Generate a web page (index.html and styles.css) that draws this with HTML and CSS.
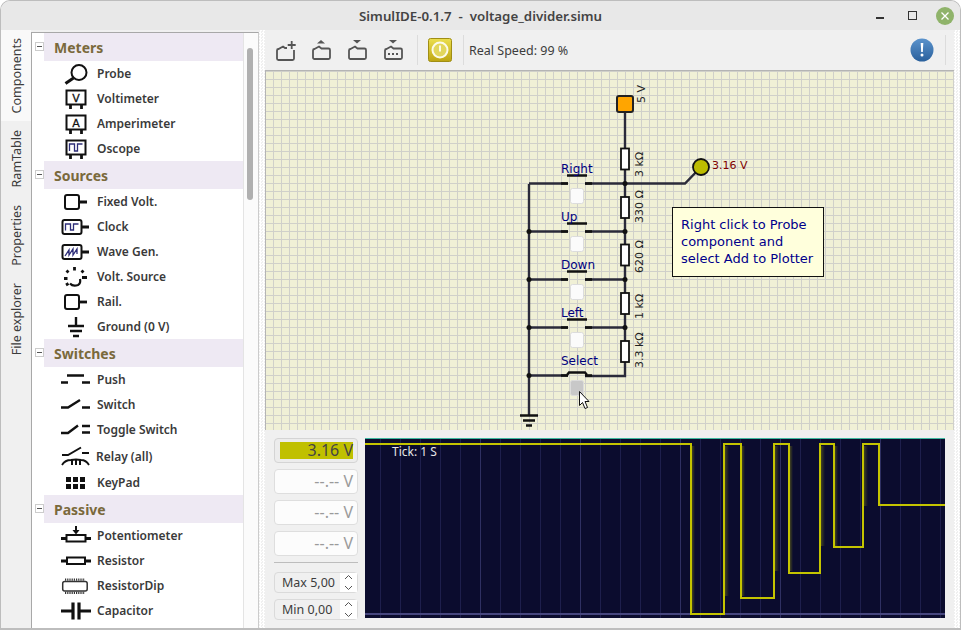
FILE: index.html
```html
<!DOCTYPE html>
<html lang="en">
<head>
<meta charset="utf-8">
<title>SimulIDE-0.1.7 - voltage_divider.simu</title>
<link rel="stylesheet" href="styles.css">
</head>
<body>
<div class="window">
  <header class="titlebar">
    <span class="title">SimulIDE-0.1.7&nbsp; -&nbsp; voltage_divider.simu</span>
    <div class="winbtns">
      <span class="win-min"></span>
      <span class="win-max"></span>
      <svg class="win-close" width="18" height="18" viewBox="0 0 18 18"><circle cx="9" cy="9" r="9" fill="#8fb36a"/><path d="M5.500 5.500l7 7M12.500 5.500l-7 7" stroke="#fff" stroke-width="1.300"/></svg>
    </div>
  </header>
  <div class="main">
    <nav class="tabs">
      <div class="tab active"><span>Components</span></div>
      <div class="tab"><span>RamTable</span></div>
      <div class="tab"><span>Properties</span></div>
      <div class="tab"><span>File explorer</span></div>
    </nav>
    <aside class="panel">
      <div class="tree">
        <div class="head"><i class="toggle"></i><b>Meters</b></div>
        <div class="item"><svg class="ic" viewBox="0 0 32 24"><circle cx="19" cy="10.500" r="7.500" fill="none" stroke="#111" stroke-width="2"/><path d="M13.500 16L5.500 21.500" stroke="#111" stroke-width="3"/></svg><span>Probe</span></div>
        <div class="item"><svg class="ic" viewBox="0 0 32 24"><rect x="6.500" y="3.500" width="19" height="14" fill="#fff" stroke="#111" stroke-width="2"/><path d="M10.500 18v4M21.500 18v4" stroke="#111" stroke-width="2.800"/><text x="16" y="14.500" class="ic-letter">V</text></svg><span>Voltimeter</span></div>
        <div class="item"><svg class="ic" viewBox="0 0 32 24"><rect x="6.500" y="3.500" width="19" height="14" fill="#fff" stroke="#111" stroke-width="2"/><path d="M10.500 18v4M21.500 18v4" stroke="#111" stroke-width="2.800"/><text x="16" y="14.500" class="ic-letter">A</text></svg><span>Amperimeter</span></div>
        <div class="item"><svg class="ic" viewBox="0 0 32 24"><rect x="6.500" y="3.500" width="19" height="14" fill="#fff" stroke="#111" stroke-width="2"/><path d="M10.500 18v4M21.500 18v4" stroke="#111" stroke-width="2.800"/><path d="M9.500 14V7h5v7h3V7h5" fill="none" stroke="#2c2c78" stroke-width="1.300"/></svg><span>Oscope</span></div>

        <div class="head"><i class="toggle"></i><b>Sources</b></div>
        <div class="item"><svg class="ic" viewBox="0 0 32 24"><rect x="5" y="5" width="14" height="14" rx="2" fill="#fff" stroke="#111" stroke-width="2"/><path d="M19 12h8" stroke="#111" stroke-width="2.800"/></svg><span>Fixed Volt.</span></div>
        <div class="item"><svg class="ic" viewBox="0 0 32 24"><rect x="2.500" y="5" width="19" height="14" rx="2" fill="#fff" stroke="#111" stroke-width="2"/><path d="M21 12h8" stroke="#111" stroke-width="2.800"/><path d="M5.500 15.500V9h5v6h3V9h5" fill="none" stroke="#2c2c78" stroke-width="1.300"/></svg><span>Clock</span></div>
        <div class="item"><svg class="ic" viewBox="0 0 32 24"><rect x="2.500" y="5" width="19" height="14" rx="2" fill="#fff" stroke="#111" stroke-width="2"/><path d="M21 12h8" stroke="#111" stroke-width="2.800"/><path d="M5 16l4-6v5l4-6v6l4-6v5" fill="none" stroke="#2c2c78" stroke-width="1.300"/></svg><span>Wave Gen.</span></div>
        <div class="item"><svg class="ic" viewBox="0 0 32 24"><path d="M14.500 2v3.500M6.500 5.500l2 2M23.500 5.500l-2 2M4 13.500h3.500M22 12.500h5M6 20l2.500-1.500" stroke="#111" stroke-width="2.800"/><path d="M10 18.500q3 3.500 8 1.500q3-1.500 2-6" fill="none" stroke="#111" stroke-width="2.200"/></svg><span>Volt. Source</span></div>
        <div class="item"><svg class="ic" viewBox="0 0 32 24"><rect x="5" y="5" width="14" height="14" rx="2" fill="#fff" stroke="#111" stroke-width="2"/><path d="M19 12h8" stroke="#111" stroke-width="2.800"/></svg><span>Rail.</span></div>
        <div class="item"><svg class="ic" viewBox="0 0 32 24"><path d="M16 2v9" stroke="#111" stroke-width="2.400"/><path d="M8 11h16M10 16h12M13 21h6" stroke="#111" stroke-width="2.600"/></svg><span>Ground (0 V)</span></div>

        <div class="head"><i class="toggle"></i><b>Switches</b></div>
        <div class="item"><svg class="ic" viewBox="0 0 32 24"><path d="M7 7.500h17M1 14.500h7M22 14.500h8" stroke="#111" stroke-width="2.400"/></svg><span>Push</span></div>
        <div class="item"><svg class="ic" viewBox="0 0 32 24"><path d="M1 14.500h7L20 7M22 14.500h8" fill="none" stroke="#111" stroke-width="2.400"/></svg><span>Switch</span></div>
        <div class="item"><svg class="ic" viewBox="0 0 32 24"><path d="M1 15h7l10-7.500M22 8h8M22 14.500h8" fill="none" stroke="#111" stroke-width="2.400"/></svg><span>Toggle Switch</span></div>
        <div class="item tall"><svg class="ic" viewBox="0 0 32 24"><path d="M2 11h6l13-7.500M22 9h7" fill="none" stroke="#111" stroke-width="2"/><path d="M2 21q3-5 9-5q5-1 10 0q5 0 8 5" fill="none" stroke="#111" stroke-width="1.800"/><path d="M12 16v5M16 16v5M20 16v5" stroke="#111" stroke-width="2"/></svg><span>Relay (all)</span></div>
        <div class="item"><svg class="ic" viewBox="0 0 32 24"><path d="M6 6h5v5H6zM13 6h5v5h-5zM20 6h5v5h-5zM6 13h5v5H6zM13 13h5v5h-5zM20 13h5v5h-5z" fill="#111"/></svg><span>KeyPad</span></div>

        <div class="head"><i class="toggle"></i><b>Passive</b></div>
        <div class="item"><svg class="ic" viewBox="0 0 32 24"><rect x="6.500" y="11" width="19" height="6.500" fill="#fff" stroke="#111" stroke-width="2"/><path d="M1 14.500h5M26 14.500h5" stroke="#111" stroke-width="3"/><path d="M16 2v6" stroke="#111" stroke-width="2"/><path d="M12.500 6h7L16 10.500z" fill="#111"/></svg><span>Potentiometer</span></div>
        <div class="item"><svg class="ic" viewBox="0 0 32 24"><rect x="7" y="8.500" width="18" height="6.500" fill="#fff" stroke="#111" stroke-width="2"/><path d="M1 12h6M25 12h6" stroke="#111" stroke-width="3"/></svg><span>Resistor</span></div>
        <div class="item"><svg class="ic" viewBox="0 0 32 24"><rect x="2.700" y="7.500" width="24.500" height="9.500" rx="2" fill="#fff" stroke="#333" stroke-width="1.500"/><path d="M5 5.700h20M5 18.800h20" stroke="#333" stroke-width="2.200" stroke-dasharray="1.200 1"/></svg><span>ResistorDip</span></div>
        <div class="item"><svg class="ic" viewBox="0 0 32 24"><path d="M1 12h12M19 12h12" stroke="#111" stroke-width="2.800"/><path d="M13 3.500v17M19 3.500v17" stroke="#111" stroke-width="3.200"/></svg><span>Capacitor</span></div>
      </div>
      <div class="scrollbar"><div class="thumb"></div></div>
    </aside>
    <div class="grip"></div>
    <section class="work">
      <div class="toolbar">
        <svg class="tool" width="22" height="22" viewBox="0 0 22 22"><path d="M12 9H10L8 7.500L3.500 10a1.500 1.500 0 0 0-1.500 1.500V19.500a1.500 1.500 0 0 0 1.500 1.500H17.500a1.500 1.500 0 0 0 1.500-1.500V11" fill="none" stroke="#555" stroke-width="1.800"/><path d="M16.700 2v8M12.700 6h8" stroke="#555" stroke-width="1.800"/></svg>
        <svg class="tool" width="22" height="22" viewBox="0 0 22 22"><path class="folder" d="M3.500 10L8 7.500L10.500 9.500H17.500a1.500 1.500 0 0 1 1.500 1.500V18.500a1.500 1.500 0 0 1-1.500 1.500H3.500a1.500 1.500 0 0 1-1.500-1.500V11.500a1.500 1.500 0 0 1 1.500-1.500z"/><path d="M6 4.500L10 1l4 3.500z" fill="#555"/></svg>
        <svg class="tool" width="22" height="22" viewBox="0 0 22 22"><path class="folder" d="M3.500 10L8 7.500L10.500 9.500H17.500a1.500 1.500 0 0 1 1.500 1.500V18.500a1.500 1.500 0 0 1-1.500 1.500H3.500a1.500 1.500 0 0 1-1.500-1.500V11.500a1.500 1.500 0 0 1 1.500-1.500z"/><path d="M6 1h8l-4 3.500z" fill="#555"/></svg>
        <svg class="tool" width="22" height="22" viewBox="0 0 22 22"><path class="folder" d="M3.500 10L8 7.500L10.500 9.500H17.500a1.500 1.500 0 0 1 1.500 1.500V18.500a1.500 1.500 0 0 1-1.500 1.500H3.500a1.500 1.500 0 0 1-1.500-1.500V11.500a1.500 1.500 0 0 1 1.500-1.500z"/><path d="M6 1h8l-4 3.500z" fill="#555"/><path d="M5 14h2v2H5zM9 14h2v2H9zM13 14h2v2h-2z" fill="#555"/></svg>
        <span class="tsep first"></span>
        <svg class="power" width="24" height="24" viewBox="0 0 24 24"><defs><linearGradient id="pg" x1="0" y1="0" x2="0" y2="1"><stop offset="0" stop-color="#ecdf4e"/><stop offset="1" stop-color="#bda512"/></linearGradient></defs><rect x=".5" y=".5" width="23" height="23" rx="2" fill="url(#pg)" stroke="#a08e14"/><circle cx="12" cy="12" r="7.500" fill="#e2d65c" stroke="#fcfae8" stroke-width="2"/><path d="M12 7.500v6" stroke="#fcfae8" stroke-width="2"/></svg>
        <span class="tsep"></span>
        <span class="speed">Real Speed: 99 %</span>
        <svg class="info" width="24" height="24" viewBox="0 0 24 24"><defs><linearGradient id="ig" x1="0" y1="0" x2="0" y2="1"><stop offset="0" stop-color="#5b93cc"/><stop offset="1" stop-color="#2a609c"/></linearGradient></defs><circle cx="12" cy="12" r="11.500" fill="url(#ig)"/><path d="M10.700 5h2.600l-.5 9h-1.600z" fill="#fff"/><circle cx="12" cy="17" r="1.500" fill="#fff"/></svg>
        <span class="tsep last"></span>
      </div>
      <div class="canvas">
        <svg class="schem" viewBox="265 70 689 360" width="689" height="360">
          <g class="wire">
            <path d="M625 112V376H585M568 375.500H529M529 184V415M529 183.500H568M585 183.500H685L701 167M529 231.500H568M585 231.500H625M529 279.500H568M585 279.500H625M529 327.500H568M585 327.500H625"/>
          </g>
          <g class="term">
            <path d="M561 183.500h7M585 183.500h7M561 231.500h7M585 231.500h7M561 279.500h7M585 279.500h7M561 327.500h7M585 327.500h7M561 375.500h7M585 375.500h7"/>
            <path d="M567 175.500h20M567 223.500h20M567 271.500h20M567 319.500h20M567 375l2-2.500h16l2 2.500"/>
            <path d="M520 415.500h18M523 420.500h12M526 425.500h6"/>
          </g>
          <g class="dots">
            <circle cx="625" cy="183.500" r="2.500"/><circle cx="529" cy="231.500" r="2.500"/><circle cx="625" cy="231.500" r="2.500"/><circle cx="529" cy="279.500" r="2.500"/><circle cx="625" cy="279.500" r="2.500"/><circle cx="529" cy="327.500" r="2.500"/><circle cx="625" cy="327.500" r="2.500"/><circle cx="529" cy="375.500" r="2.500"/>
          </g>
          <rect class="vsrc" x="617" y="96" width="16" height="16" rx="2"/>
          <g class="res">
            <rect x="621" y="148.500" width="8" height="21"/>
            <rect x="621" y="197" width="8" height="21"/>
            <rect x="621" y="244.500" width="8" height="21"/>
            <rect x="621" y="293" width="8" height="21"/>
            <rect x="621" y="341" width="8" height="21"/>
          </g>
          <circle class="probe" cx="701" cy="167" r="8"/>
          <g class="btns">
            <rect x="570.500" y="188.500" width="13" height="15" rx="2"/>
            <rect x="570.500" y="236.500" width="13" height="15" rx="2"/>
            <rect x="570.500" y="284.500" width="13" height="15" rx="2"/>
            <rect x="570.500" y="332.500" width="13" height="15" rx="2"/>
            <rect class="down" x="570.500" y="380.500" width="13" height="15" rx="2"/>
          </g>
          <g class="lbl">
            <text x="561" y="173">Right</text>
            <text x="561" y="221">Up</text>
            <text x="561" y="269">Down</text>
            <text x="561" y="317">Left</text>
            <text x="561" y="365">Select</text>
          </g>
          <g class="val">
            <text transform="translate(645 103) rotate(-90)">5 V</text>
            <text transform="translate(643 177) rotate(-90)">3 kΩ</text>
            <text transform="translate(643 223) rotate(-90)">330 Ω</text>
            <text transform="translate(643 273) rotate(-90)">620 Ω</text>
            <text transform="translate(643 319) rotate(-90)">1 kΩ</text>
            <text transform="translate(643 368) rotate(-90)">3.3 kΩ</text>
          </g>
          <text class="pv" x="712" y="169">3.16 V</text>
          <path class="cursor" d="M579.500 391.500v14l3-3 2.500 6 2.500-1-2.500-6h4z"/>
        </svg>
        <div class="note">Right click to Probe<br>component and<br>select Add to Plotter</div>
      </div>
      <div class="plotter">
        <div class="side">
          <div class="disp on"><span>3.16 V</span></div>
          <div class="disp"><span>--.-- V</span></div>
          <div class="disp"><span>--.-- V</span></div>
          <div class="disp"><span>--.-- V</span></div>
          <hr class="rule">
          <div class="spin"><span>Max 5,00</span><div class="arrows"><svg width="17" height="21" viewBox="0 0 17 21"><path d="M5 7l3.500-3.500L12 7M5 14l3.500 3.500L12 14" fill="none" stroke="#555" stroke-width="1"/></svg></div></div>
          <div class="spin"><span>Min 0,00</span><div class="arrows"><svg width="17" height="21" viewBox="0 0 17 21"><path d="M5 7l3.500-3.500L12 7M5 14l3.500 3.500L12 14" fill="none" stroke="#555" stroke-width="1"/></svg></div></div>
        </div>
        <div class="screen">
          <svg width="580" height="180" viewBox="365 438 580 180">
            <defs><linearGradient id="trail"><stop offset="0" stop-color="#c4c400" stop-opacity=".3"/><stop offset="1" stop-color="#c4c400" stop-opacity="0"/></linearGradient></defs>
            <rect x="365" y="438" width="580" height="180" fill="#0b0c2e"/>
            <path class="gl" d="M380.500 438V618M400.500 438V618M420.500 438V618M440.500 438V618M460.500 438V618M500.500 438V618M520.500 438V618M540.500 438V618M560.500 438V618M600.500 438V618M620.500 438V618M640.500 438V618M660.500 438V618M700.500 438V618M720.500 438V618M740.500 438V618M760.500 438V618M800.500 438V618M820.500 438V618M840.500 438V618M860.500 438V618M900.500 438V618M920.500 438V618M940.500 438V618"/>
            <path class="glb" d="M480.500 438V618M580.500 438V618M680.500 438V618M780.500 438V618M880.500 438V618"/>
            <path class="top" d="M365 438.500H945"/>
            <path class="base" d="M365 614H945"/>
            <g fill="url(#trail)">
              <rect x="692" y="446" width="3" height="166"/>
              <rect x="725" y="446" width="4" height="150"/>
              <rect x="742" y="446" width="3" height="150"/>
              <rect x="775" y="446" width="4" height="125"/>
              <rect x="790" y="446" width="3" height="125"/>
              <rect x="821" y="446" width="4" height="100"/>
              <rect x="835" y="446" width="3" height="100"/>
              <rect x="864" y="446" width="4" height="60"/>
            </g>
            <path class="trace" d="M365 444H691V614H724V444H741V598H774V444H789V573H820V444H834V547H863V444H879V505H945"/>
            <text class="tick" x="392" y="456">Tick: 1 S</text>
          </svg>
        </div>
      </div>
    </section>
    <div class="grip"></div>
  </div>
</div>
</body>
</html>
```

FILE: styles.css
```css
html, body {
  margin: 0;
  padding: 0;
  background: #fff;
  font-family: "Noto Sans", "Open Sans", sans-serif;
}
.window {
  width: 961px;
  height: 630px;
  box-sizing: border-box;
  display: flex;
  flex-direction: column;
  background: #f0f0f0;
  border: 1px solid #bdbdbd;
  border-width: 1px 1px 2px 1px;
  border-radius: 10px 10px 0 0;
  overflow: hidden;
}
.titlebar {
  height: 29px;
  flex: none;
  display: flex;
  align-items: center;
  justify-content: center;
  position: relative;
  background: #e8e8e8;
}
.title {
  font-size: 13.300px;
  font-weight: 600;
  color: #444;
}
.winbtns {
  position: absolute;
  top: 0;
  right: 0;
  height: 29px;
  display: flex;
  align-items: center;
}
.win-min {
  width: 8px;
  height: 1px;
  margin-top: 4px;
  background: #333;
  border-bottom: 1px solid #333;
}
.win-max {
  width: 7px;
  height: 7px;
  margin-left: 24px;
  border: 1px solid #333;
}
.win-close {
  margin-left: 19px;
  margin-right: 6px;
}
.main {
  flex: 1;
  min-height: 0;
  display: flex;
}
.tabs {
  width: 30px;
  flex: none;
  display: flex;
  flex-direction: column;
}
.tab {
  box-sizing: border-box;
  width: 30px;
  display: flex;
  align-items: center;
  justify-content: center;
  padding: 8px 0;
  margin-bottom: 1px;
  color: #3c3c3c;
  font-size: 12.500px;
}
.tab.active {
  background: #f9f9f9;
}
.tab span {
  writing-mode: vertical-rl;
  transform: rotate(180deg);
  white-space: nowrap;
}
.panel {
  width: 228px;
  flex: none;
  margin-top: 2px;
  box-sizing: border-box;
  display: flex;
  background: #fff;
  border: 1px solid #a8a8a8;
  border-width: 1px 1px 0 1px;
  border-right-color: #ccc;
  overflow: hidden;
}
.tree {
  width: 211px;
  flex: none;
  padding-left: 12px;
  box-sizing: border-box;
}
.head {
  height: 28px;
  display: flex;
  align-items: center;
  position: relative;
  background: #eee9f3;
  padding-left: 10px;
}
.head b {
  font-size: 14px;
  font-weight: 700;
  color: #7a693c;
}
.toggle {
  position: absolute;
  left: -9px;
  top: 9px;
  width: 7px;
  height: 7px;
  background: #fff;
  border: 1px solid #ccc;
}
.toggle::after {
  content: "";
  position: absolute;
  left: 1px;
  top: 3px;
  width: 5px;
  height: 1px;
  background: #555;
}
.item {
  height: 25px;
  display: flex;
  align-items: center;
  font-size: 12px;
  font-weight: 600;
  color: #3a3a3a;
}
.item.tall {
  height: 28px;
}
.item.tall span {
  margin-left: -1px;
}
.ic {
  width: 32px;
  height: 24px;
  margin-left: 16px;
  margin-right: 5px;
  flex: none;
}
.ic-letter {
  font: 400 11px "DejaVu Sans", sans-serif;
  stroke: #111;
  stroke-width: .3;
  fill: #111;
  text-anchor: middle;
}
.scrollbar {
  flex: 1;
  border-left: 1px solid #e4e4e4;
  background: #fbfbfb;
  position: relative;
}
.thumb {
  position: absolute;
  left: 3px;
  top: 15px;
  width: 6px;
  height: 152px;
  border-radius: 3px;
  background: #b0b0b0;
}
.work {
  flex: 1;
  min-width: 0;
  display: flex;
  flex-direction: column;
}
.toolbar {
  height: 40px;
  flex: none;
  display: flex;
  align-items: center;
  padding-left: 10px;
  padding-right: 8px;
}
.tool {
  margin-right: 14px;
  flex: none;
}
.folder {
  fill: none;
  stroke: #555;
  stroke-width: 1.800;
}
.tsep {
  width: 1px;
  height: 30px;
  background: #dcdcdc;
}
.tsep.first {
  margin: 0 10px 0 -2px;
}
.power {
  margin-right: 11px;
  flex: none;
}
.speed {
  margin-left: 5px;
  font-size: 12.500px;
  color: #3c3c3c;
}
.info {
  margin-left: auto;
  margin-right: 11px;
  flex: none;
}
.canvas {
  width: 689px;
  height: 360px;
  flex: none;
  position: relative;
  overflow: hidden;
  box-sizing: border-box;
  border-top: 1px solid #b4b4b4;
  border-left: 1px solid #b4b4b4;
  background-color: #f0f0d6;
  background-image:
    linear-gradient(90deg, #d0d0ca 1px, transparent 1px),
    linear-gradient(#d0d0ca 1px, transparent 1px);
  background-size: 8px 8px;
  background-position: 7px 0;
}
.schem {
  position: absolute;
  left: -1px;
  top: -1px;
  display: block;
}
.wire path {
  fill: none;
  stroke: #2a2a3a;
  stroke-width: 2.400;
}
.term path {
  fill: none;
  stroke: #111;
  stroke-width: 2.400;
}
.dots circle {
  fill: #111;
}
.vsrc {
  fill: #ffa500;
  stroke: #222;
  stroke-width: 2;
}
.res rect {
  fill: #fff;
  stroke: #111;
  stroke-width: 1.800;
}
.probe {
  fill: #bcbc00;
  stroke: #111;
  stroke-width: 1.800;
}
.btns rect {
  fill: #fbfbfb;
  stroke: #dcdcdc;
}
.btns rect.down {
  fill: #c8c8c8;
}
.lbl text {
  font: 12px "DejaVu Sans", sans-serif;
  fill: #000080;
}
.val text {
  font: 11px "DejaVu Sans", sans-serif;
  fill: #222;
}
.pv {
  font: 11px "DejaVu Sans", sans-serif;
  fill: #800000;
}
.cursor {
  fill: #fff;
  stroke: #111;
  stroke-width: 1;
}
.note {
  position: absolute;
  left: 406px;
  top: 136px;
  width: 134px;
  height: 52px;
  padding: 8px;
  background: #ffffdc;
  border: 1px solid #111;
  font: 13px/17px "DejaVu Sans", sans-serif;
  color: #00008b;
}
.plotter {
  flex: 1;
  min-height: 0;
  display: flex;
  padding: 8px 0 0 9px;
}
.side {
  width: 84px;
  flex: none;
  display: flex;
  flex-direction: column;
}
.disp {
  height: 25px;
  box-sizing: border-box;
  margin-bottom: 6px;
  border: 1px solid #dedede;
  border-radius: 4px;
  background: #fcfcfc;
  padding: 3px 4px 3px 5px;
  display: flex;
}
.disp span {
  flex: 1;
  text-align: right;
  font-size: 16px;
  line-height: 17px;
  color: #9a9a9a;
}
.disp.on {
  background: #ececec;
  border-color: #d4d4d4;
}
.disp.on span {
  background: #c0c000;
  color: #444;
}
.rule {
  width: 100%;
  height: 0;
  margin: 0 0 9px;
  border: 0;
  border-top: 1px solid #bdbdbd;
}
.spin {
  height: 21px;
  margin-bottom: 6px;
  display: flex;
  align-items: center;
  box-sizing: border-box;
  border: 1px solid #dadada;
  border-radius: 4px;
  background: #f0f0f0;
  font-size: 12.500px;
  color: #3c3c3c;
  padding-left: 7px;
}
.spin span {
  flex: 1;
}
.arrows {
  width: 17px;
  height: 19px;
  background: #fff;
  flex: none;
  overflow: hidden;
}
.arrows svg {
  display: block;
  margin-top: -1px;
}
.screen {
  margin-left: 7px;
  width: 580px;
  height: 180px;
  flex: none;
}
.screen svg {
  display: block;
}
.gl {
  stroke: #1e1f4c;
  stroke-width: 1;
}
.glb {
  stroke: #2f3062;
  stroke-width: 1;
}
.top {
  stroke: #3fb8a0;
  stroke-width: 1;
}
.base {
  stroke: #46467e;
  stroke-width: 2;
}
.trace {
  fill: none;
  stroke: #c4c400;
  stroke-width: 2;
}
.tick {
  font: 12px "Noto Sans", sans-serif;
  fill: #e6e6e6;
}
.grip {
  width: 6px;
  flex: none;
  background-image: repeating-conic-gradient(#fff 0 25%, #f0f0f0 0 50%);
  background-size: 3px 3px;
}
```
